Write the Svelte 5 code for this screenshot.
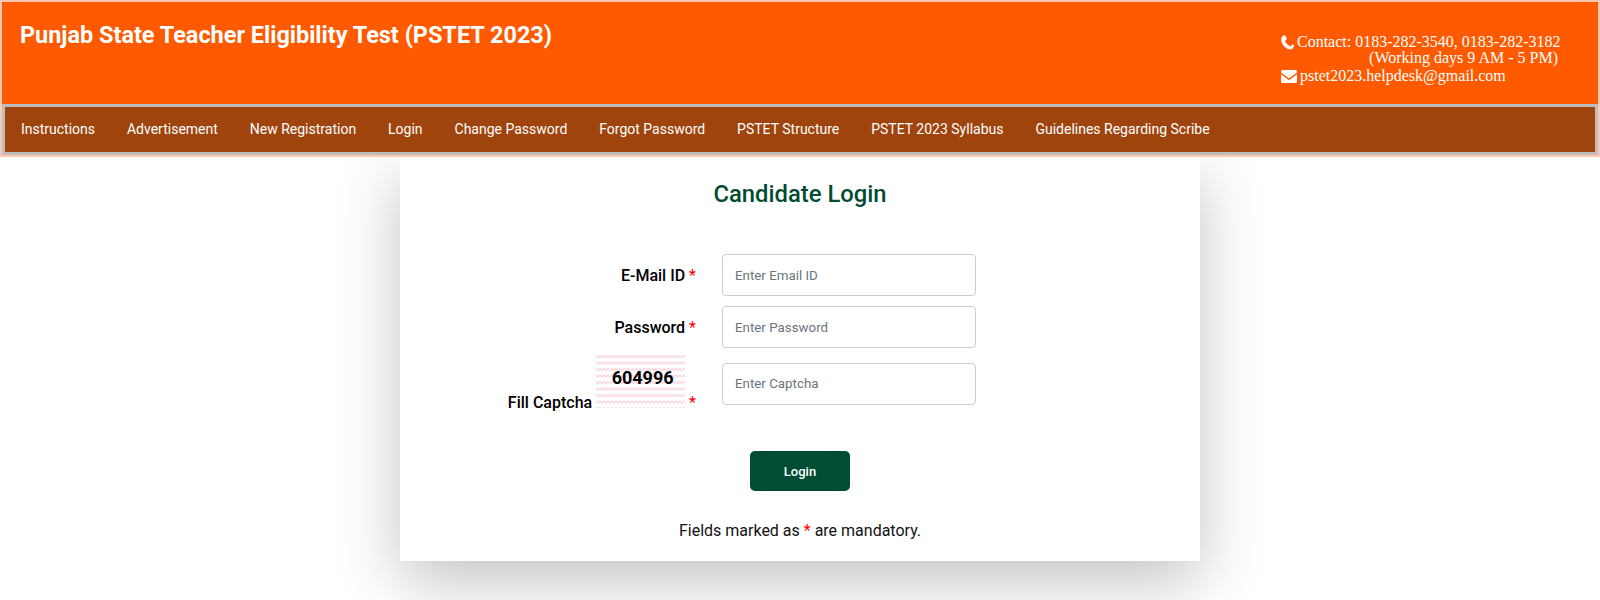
<script>
  const links = ['Instructions','Advertisement','New Registration','Login','Change Password','Forgot Password','PSTET Structure','PSTET 2023 Syllabus','Guidelines Regarding Scribe'];
</script>

<div class="page">
  <div class="shell">
    <header class="head">
      <h1>Punjab State Teacher Eligibility Test (PSTET 2023)</h1>
      <div class="contact">
        <div class="line">
          <svg class="ic-phone" viewBox="0 0 16 16"><path fill="#fff" d="M15.6 11.9c0 .2 0 .5-.1.8-.1.4-.2.7-.3.9-.2.5-.9 1-1.8 1.4-.5.3-1.1.4-1.6.4h-.5c-.2 0-.3-.1-.4-.1-.1 0-.3-.1-.5-.1-.2-.1-.4-.1-.4-.2l-.5-.2c-.6-.2-1.1-.4-1.5-.7-.7-.4-1.5-1.1-2.3-1.9-.8-.8-1.4-1.6-1.9-2.3-.2-.4-.5-.9-.7-1.5l-.2-.5c-.1-.1-.1-.3-.2-.4 0-.2-.1-.4-.1-.5 0-.1-.1-.3-.1-.4V4.100c0-.5.1-1.100.4-1.600.5-.9.9-1.500 1.400-1.800.2-.1.5-.2.9-.3.4-.1.6-.1.8-.1h.3c.2.100.4.400.7 1 .1.100.2.400.4.700.1.300.3.500.4.700.1.200.2.400.3.600.100.100.100.200.200.300.100.100.100.300.100.300 0 .200-.1.300-.2.500-.1.200-.3.400-.5.600-.2.200-.4.400-.5.500-.2.200-.3.300-.5.500-.1.100-.2.300-.2.400 0 .1 0 .2.100.3 0 .1.100.2.100.3.100.100.100.200.200.300.100.100.100.200.100.200.500.900 1.100 1.700 1.700 2.300.6.600 1.400 1.200 2.300 1.700 0 0 .1.100.2.100.1.100.2.100.3.200.1 0 .2.100.3.100.1.100.2.100.3.100.1 0 .3-.1.400-.2.200-.2.300-.3.500-.5.100-.1.300-.3.500-.5.200-.2.400-.4.600-.5.200-.1.300-.2.500-.2.100 0 .2 0 .3.100.1.100.200.100.300.200.200.100.400.200.600.300.200.100.400.300.700.400.300.200.600.300.700.400.600.300.900.500 1 .7v.300z"/></svg>
          <span>Contact: 0183-282-3540, 0183-282-3182</span>
        </div>
        <div class="hours">(Working days 9 AM - 5 PM)</div>
        <div class="line mail">
          <svg class="ic-mail" viewBox="0 0 16 12" preserveAspectRatio="none"><path fill="#fff" d="M1.500 0h13c.8 0 1.500.7 1.500 1.500 0 .5-.3 1-.7 1.300L8.500 7.300c-.3.2-.7.2-1 0L.7 2.800C.3 2.500 0 2 0 1.500 0 .7.700 0 1.500 0zM0 4l7 4.700c.6.400 1.400.400 2 0L16 4v6.500c0 .8-.7 1.500-1.500 1.500h-13C.7 12 0 11.300 0 10.500V4z"/></svg>
          <span>pstet2023.helpdesk@gmail.com</span>
        </div>
      </div>
    </header>

    <nav class="nav">
      {#each links as link}
        <a href="#top">{link}</a>
      {/each}
    </nav>
  </div>

  <main class="card">
    <h2>Candidate Login</h2>
    <form class="form" onsubmit={(e) => e.preventDefault()}>
      <div class="row">
        <label for="em">E-Mail ID <span class="req">*</span></label>
        <input id="em" type="text" placeholder="Enter Email ID" />
      </div>
      <div class="row">
        <label for="pw">Password <span class="req">*</span></label>
        <input id="pw" type="password" placeholder="Enter Password" />
      </div>
      <div class="row row-cap">
        <label for="cp">Fill Captcha <span class="captcha"><svg class="noise" width="89" height="53" aria-hidden="true"><defs><pattern id="zig" width="4" height="6.500" patternUnits="userSpaceOnUse"><path d="M-1 1.500 L0 .5 L2 2.500 L4 .5 L5 1.500" fill="none" stroke="#fcd0dc" stroke-width="1.300"/></pattern></defs><rect width="89" height="53" fill="url(#zig)"/></svg><span class="code">604996</span></span> <span class="req">*</span></label>
        <input id="cp" type="text" placeholder="Enter Captcha" />
      </div>
      <div class="actions"><button type="submit">Login</button></div>
      <p class="note">Fields marked as <span class="req">*</span> are mandatory.</p>
    </form>
  </main>
</div>

<style>
  :global(body) { margin: 0; background: #fff; }
  .page { font-family: Roboto, "Liberation Sans", sans-serif; height: 600px; overflow: hidden; }
  .shell { border: 2px solid #ffc9b0; position: relative; z-index: 1; background: #fff; }
  .head { height: 102px; background: #ff5a00; display: flex; justify-content: space-between; }
  h1 { margin: 0; padding: 18px 0 0 18px; font-size: 23.45px; line-height: 30px; font-weight: 700; color: #fff; }
  .contact { width: 320px; padding: 32px 0 0 1px; font-family: "Liberation Serif", serif; font-size: 16px; color: #fff; line-height: 16px; box-sizing: border-box; }
  .line { display: flex; align-items: center; gap: 3px; height: 16px; }
  .hours { text-align: right; padding-right: 40px; }
  .mail { height: 20px; gap: 3px; }
  .ic-phone { width: 15px; height: 15px; }
  .ic-mail { width: 16px; height: 13px; margin-left: 2px; }
  .nav {
    background: #a0440e; border: 3px solid #bdbdbd; height: 43px; padding-bottom: 2px;
    display: flex; align-items: center;
  }
  .nav a { color: #fff; text-decoration: none; font-size: 14px; padding: 0 15.98px; }
  .card {
    width: 800px; height: 404px; margin: 0 auto; background: #fff;
    box-shadow: 0 20px 60px rgba(0,0,0,.24); box-sizing: border-box;
  }
  h2 { margin: 0; padding-top: 21px; text-align: center; font-size: 23.8px; line-height: 32px; font-weight: 500; color: #034c33; }
  .form { padding-top: 44px; }
  .row { display: grid; grid-template-columns: 296px 254px; column-gap: 26px; align-items: center; margin-bottom: 10px; }
  .row-cap { margin-top: -3px; }
  label { text-align: right; font-size: 16px; font-weight: 500; color: #000; }
  .req { color: #f00; font-weight: 400; }
  input {
    height: 42px; width: 254px; box-sizing: border-box; border: 1px solid #ccc; border-radius: 4px;
    padding: 0 12px; font-family: inherit; font-size: 13.33px; outline: none;
  }
  input::placeholder { color: #6c757d; opacity: 1; }
  .captcha {
    display: inline-block; position: relative; overflow: hidden; width: 89px; height: 53px; line-height: 45px;
    text-align: center; font-size: 18px; font-weight: 700;
  }
  .noise { position: absolute; left: 0; top: 0; }
  .code { position: relative; left: 2px; }
  .actions { display: flex; justify-content: center; margin-top: 39px; }
  button {
    width: 100px; height: 40px; background: #004d33; color: #fff; border: 0; border-radius: 5px;
    font-family: inherit; font-size: 13px; font-weight: 500;
  }
  .note { margin: 28px 0 0; text-align: center; font-size: 16px; line-height: 24px; color: #111; }
</style>
